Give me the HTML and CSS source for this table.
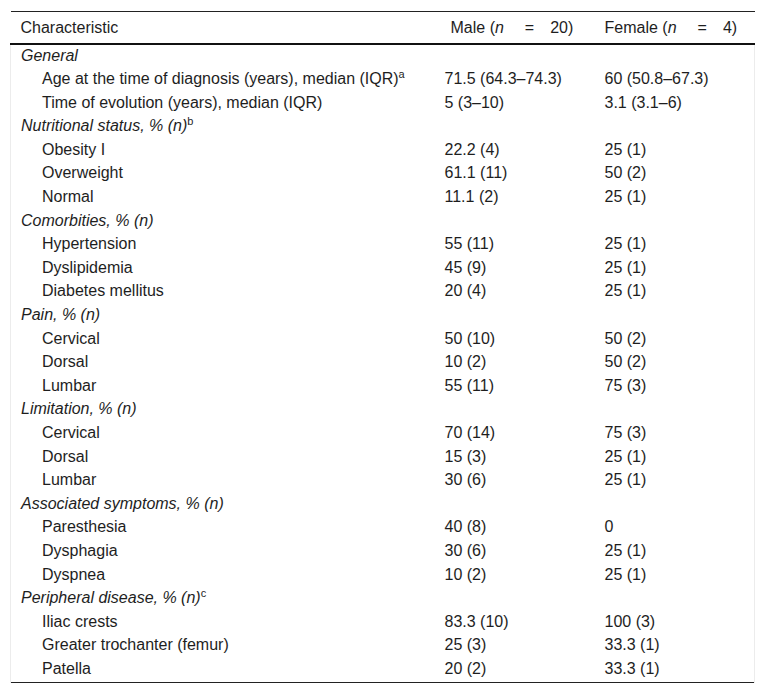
FILE: index.html
```html
<!DOCTYPE html>
<html>
<head>
<meta charset="utf-8">
<link rel="stylesheet" href="styles.css">
</head>
<body>
<table class="tbl">
  <colgroup>
    <col class="c1"><col class="c2"><col class="c3">
  </colgroup>
  <thead>
    <tr>
      <th>Characteristic</th>
      <th class="male">Male (<i>n</i><span class="eq">=</span>20)</th>
      <th>Female (<i>n</i><span class="eq">=</span>4)</th>
    </tr>
  </thead>
  <tbody>
    <tr class="grp"><td colspan="3">General</td></tr>
    <tr><td class="ind">Age at the time of diagnosis (years), median (IQR)<sup>a</sup></td><td>71.5 (64.3–74.3)</td><td>60 (50.8–67.3)</td></tr>
    <tr><td class="ind">Time of evolution (years), median (IQR)</td><td>5 (3–10)</td><td>3.1 (3.1–6)</td></tr>
    <tr class="grp"><td colspan="3">Nutritional status, % (n)<sup>b</sup></td></tr>
    <tr><td class="ind">Obesity I</td><td>22.2 (4)</td><td>25 (1)</td></tr>
    <tr><td class="ind">Overweight</td><td>61.1 (11)</td><td>50 (2)</td></tr>
    <tr><td class="ind">Normal</td><td>11.1 (2)</td><td>25 (1)</td></tr>
    <tr class="grp"><td colspan="3">Comorbities, % (n)</td></tr>
    <tr><td class="ind">Hypertension</td><td>55 (11)</td><td>25 (1)</td></tr>
    <tr><td class="ind">Dyslipidemia</td><td>45 (9)</td><td>25 (1)</td></tr>
    <tr><td class="ind">Diabetes mellitus</td><td>20 (4)</td><td>25 (1)</td></tr>
    <tr class="grp"><td colspan="3">Pain, % (n)</td></tr>
    <tr><td class="ind">Cervical</td><td>50 (10)</td><td>50 (2)</td></tr>
    <tr><td class="ind">Dorsal</td><td>10 (2)</td><td>50 (2)</td></tr>
    <tr><td class="ind">Lumbar</td><td>55 (11)</td><td>75 (3)</td></tr>
    <tr class="grp"><td colspan="3">Limitation, % (n)</td></tr>
    <tr><td class="ind">Cervical</td><td>70 (14)</td><td>75 (3)</td></tr>
    <tr><td class="ind">Dorsal</td><td>15 (3)</td><td>25 (1)</td></tr>
    <tr><td class="ind">Lumbar</td><td>30 (6)</td><td>25 (1)</td></tr>
    <tr class="grp"><td colspan="3">Associated symptoms, % (n)</td></tr>
    <tr><td class="ind">Paresthesia</td><td>40 (8)</td><td>0</td></tr>
    <tr><td class="ind">Dysphagia</td><td>30 (6)</td><td>25 (1)</td></tr>
    <tr><td class="ind">Dyspnea</td><td>10 (2)</td><td>25 (1)</td></tr>
    <tr class="grp"><td colspan="3">Peripheral disease, % (n)<sup>c</sup></td></tr>
    <tr><td class="ind">Iliac crests</td><td>83.3 (10)</td><td>100 (3)</td></tr>
    <tr><td class="ind">Greater trochanter (femur)</td><td>25 (3)</td><td>33.3 (1)</td></tr>
    <tr><td class="ind">Patella</td><td>20 (2)</td><td>33.3 (1)</td></tr>
  </tbody>
</table>
</body>
</html>
```

FILE: styles.css
```css
html, body {
  margin: 0;
  padding: 0;
  background: #ffffff;
}
body {
  padding: 11px 10px 0 10px;
  font-family: "Liberation Sans", Arial, sans-serif;
  font-size: 16px;
  color: #1e1e1e;
}
.tbl {
  border-collapse: collapse;
  table-layout: fixed;
  width: 744px;
  border-top: 1px solid #222;
  border-bottom: 1px solid #222;
}
.c1 { width: 424px; }
.c2 { width: 160px; }
.c3 { width: 160px; }
.tbl th {
  font-weight: normal;
  text-align: left;
  height: 31px;
  padding: 0 10px;
  line-height: 18px;
  border-bottom: 2px solid #111;
  white-space: nowrap;
  vertical-align: middle;
}
.tbl th.male { padding-left: 16px; }
.eq { margin: 0 16px 0 21px; }
.tbl tbody td {
  padding: 1.5px 10px 4.1px 10px;
  line-height: 18px;
  white-space: nowrap;
  vertical-align: middle;
}
.tbl tbody tr td:first-child { border-left: 1px solid #ececec; }
.tbl tbody tr td:last-child { border-right: 1px solid #ececec; }
.grp td { font-style: italic; }
.ind { padding-left: 31px !important; }
sup {
  font-size: 11px;
  line-height: 0;
  vertical-align: 6px;
  font-style: normal;
}
```
